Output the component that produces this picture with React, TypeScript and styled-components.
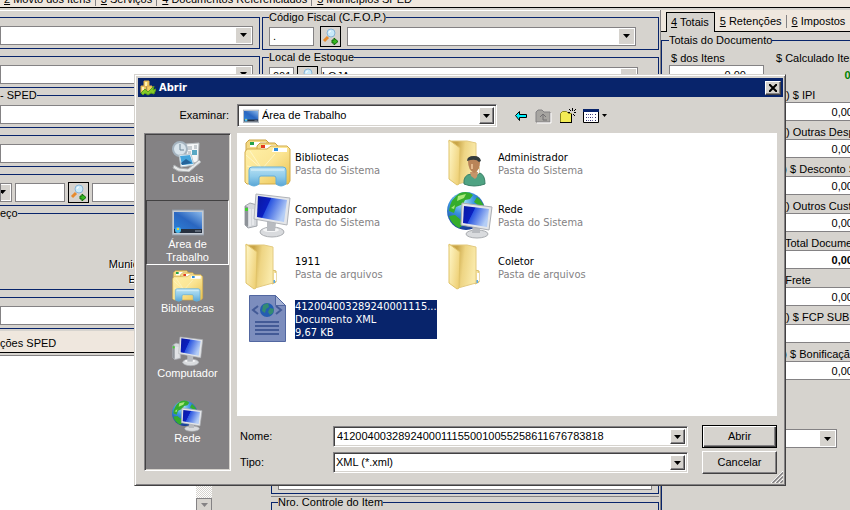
import React, { useId, useState } from 'react';
import styled, { createGlobalStyle, css } from 'styled-components';

const face = '#d6d3ce';
const shade = '#848284';
const dark = '#424142';
const navy = '#08246b';
const cream = '#efe7de';
const uiFont = '"Liberation Sans", Arial, sans-serif';
const listFont = '"DejaVu Sans Condensed", "DejaVu Sans", sans-serif';

const GlobalStyle = createGlobalStyle`
  *, *::before, *::after { box-sizing: border-box; }
  body { margin: 0; background: ${face}; color: #000; font: 11px/13px ${uiFont}; }
  button, input, select, textarea { font: inherit; color: inherit; margin: 0; border-radius: 0; }
  button, input, select, textarea { outline: none; }
  svg { display: block; flex: none; }
`;

/* ---------- icons ---------- */

const Icon = ({ size, box = 48, children }: { size: number; box?: number; children: React.ReactNode }) => (
  <svg width={size} height={size} viewBox={`0 0 ${box} ${box}`} aria-hidden="true">
    {children}
  </svg>
);

const LibrariesIcon = ({ size = 48 }) => {
  const id = useId();
  return (
    <Icon size={size}>
      <defs>
        <linearGradient id={`${id}f`} x1="0" y1="0" x2="1" y2="1">
          <stop offset="0" stopColor="#fff0a8" />
          <stop offset="0.5" stopColor="#fbe594" />
          <stop offset="1" stopColor="#e8c04c" />
        </linearGradient>
        <linearGradient id={`${id}s`} x1="0" y1="0" x2="0" y2="1">
          <stop offset="0" stopColor="#b9e2f4" />
          <stop offset="0.5" stopColor="#8fcbea" />
          <stop offset="1" stopColor="#5aa6d6" />
        </linearGradient>
      </defs>
      <path d="M2 12V4l3-3h17l3 3v9z" fill="#f3d983" stroke="#c9a447" />
      <path d="M6 3h16v5H6z" fill="#fff" />
      <path d="M6 3h4v3H6z" fill="#25a24a" />
      <path d="M13 14V7l3-3h15l3 3v8z" fill="#f3d983" stroke="#c9a447" />
      <path d="M17 6h15v5H17z" fill="#fff" />
      <path d="M17 6h4v3h-4z" fill="#e23b1d" />
      <path d="M1 13l2-3h20l4-3h16l3 3v32l-2 3H3l-2-2z" fill={`url(#${id}f)`} stroke="#d2ab4b" />
      <path d="M29 9h14v4H28z" fill="#fff" />
      <path d="M30 9h4v3h-4z" fill="#2f8ede" />
      <path d="M2 16l16 14M6 12l12 18M3 27l15 3M18 30l13-15" stroke="#fffbd8" strokeWidth="1" opacity="0.7" />
      <path d="M5 45V31q0-3 3-3h31q3 0 3 3v14q-5 4-10 0v-6q0-2-2-2H17q-2 0-2 2v6q-5 4-10 0z" fill={`url(#${id}s)`} stroke="#62aedb" />
      <path d="M7 31h33" stroke="#e3f6fc" />
    </Icon>
  );
};

const ScreenGradient = ({ id }: { id: string }) => (
  <linearGradient id={id} x1="0" y1="0" x2="1" y2="0.4">
    <stop offset="0" stopColor="#0a18a0" />
    <stop offset="0.42" stopColor="#0a1fc0" />
    <stop offset="0.45" stopColor="#2a55e0" />
    <stop offset="1" stopColor="#b4cdf6" />
  </linearGradient>
);

const ComputerIcon = ({ size = 48 }) => {
  const id = useId();
  return (
    <Icon size={size}>
      <defs><ScreenGradient id={id} /></defs>
      <path d="M1 15l5-3 7 2v21l-9 2-3-3z" fill="#d5d8dc" stroke="#a1a5ab" />
      <path d="M1 15l3 1v20l-3-2z" fill="#8d9298" />
      <path d="M6 18v17M9 18v16" stroke="#f7f8fa" />
      <path d="M1 17h3v3H1z" fill="#40d030" />
      <ellipse cx="28" cy="41" rx="12" ry="5" fill="#d9dbde" stroke="#a9acb0" />
      <ellipse cx="27" cy="39" rx="8" ry="2" fill="#f4f5f6" />
      <path d="M23 30l9 2-1 8h-8z" fill="#b8bbc0" />
      <path d="M12 3l34 4-3 27-33-6z" fill="#e4e6e9" stroke="#b0b3b8" />
      <path d="M14 5l29 4-3 22-27-5z" fill={`url(#${id})`} />
    </Icon>
  );
};

const NetworkIcon = ({ size = 48 }) => {
  const id = useId();
  return (
    <Icon size={size}>
      <defs>
        <ScreenGradient id={`${id}m`} />
        <radialGradient id={`${id}g`} cx="0.4" cy="0.25" r="0.8">
          <stop offset="0" stopColor="#b4e9fa" />
          <stop offset="0.4" stopColor="#3a93e0" />
          <stop offset="1" stopColor="#10308c" />
        </radialGradient>
      </defs>
      <circle cx="19" cy="20" r="19" fill={`url(#${id}g)`} />
      <path d="M13 2q8-3 13 2l-3 4-5 1-2 4-7 3-2 6-5-2Q3 8 13 2zM2 25l6-1 6 5 1 6-3 2Q4 33 2 25zM30 6q6 5 7 10l-6-2-4-3z" fill="#35ad2c" />
      <path d="M11 5l8-2-2 4-7 3zM4 17l4-3-1 4z" fill="#a8e878" />
      <ellipse cx="30" cy="43" rx="11" ry="4" fill="#d9dbde" stroke="#a9acb0" />
      <path d="M26 34l7 1v7h-8z" fill="#b8bbc0" />
      <path d="M15 12l30 4-3 23-28-5z" fill="#e4e6e9" stroke="#aaadb3" />
      <path d="M17 15l25 3-2 18-24-4z" fill={`url(#${id}m)`} />
    </Icon>
  );
};

const FolderShape = ({ id }: { id: string }) => (
  <>
    <defs>
      <linearGradient id={`${id}b`} x1="0" y1="0" x2="1" y2="0.2">
        <stop offset="0.3" stopColor="#c9a548" />
        <stop offset="0.6" stopColor="#eed584" />
        <stop offset="1" stopColor="#f9e9a9" />
      </linearGradient>
      <linearGradient id={`${id}l`} x1="0" y1="0" x2="1" y2="0.5">
        <stop offset="0" stopColor="#fff7c9" />
        <stop offset="1" stopColor="#efd27a" />
      </linearGradient>
    </defs>
    <path d="M28 27l4 1v11l-4 2z" fill="#f8e7a3" stroke="#d5b65e" />
    <path d="M31 30v8" stroke="#fff" strokeWidth="2" />
    <path d="M29 37h2v3h-2z" fill="#58a9e8" />
    <path d="M2 2l18 0 9 2v36l-18 5z" fill={`url(#${id}b)`} stroke="#e3ca80" />
    <path d="M2 1l11 8-1 36-2 1-8-6z" fill={`url(#${id}l)`} stroke="#e0c369" />
  </>
);

const FolderIcon = ({ size = 48 }) => (
  <Icon size={size}><FolderShape id={useId()} /></Icon>
);

const UserFolderIcon = ({ size = 48 }) => (
  <Icon size={size}>
    <FolderShape id={useId()} />
    <path d="M17 45q-1-9 7-10l5 2 4-3q5 2 5 11-11 4-21 0z" fill="#4fa383" stroke="#397f66" />
    <path d="M23 33h8l-1 5-2 2-4-3z" fill="#c69569" />
    <path d="M21 22q0-5 6-5t6 6q0 9-6 11-6-3-6-12z" fill="#b98458" />
    <path d="M20 22q0-5 7-5 6 0 7 5l-2 1q-3-4-12-1z" fill="#333b3c" />
    <path d="M24 25h2v5h-2z" fill="#e4b98d" />
  </Icon>
);

const XmlIcon = ({ size = 48 }) => (
  <Icon size={size}>
    <path d="M5.500 .5h26l10 10v36h-36z" fill="#7c8dbd" stroke="#5267a0" />
    <path d="M31.500 .5v10h10z" fill="#a4b1d3" stroke="#5267a0" />
    <path d="M14 11l-5 4 5 4M32 11l5 4-5 4" fill="none" stroke="#435a96" strokeWidth="2" />
    <circle cx="23" cy="15" r="7" fill="#245db1" />
    <path d="M19 10l5-2 1 4-3 2-1 4-3-2zM26 13l4 1-1 4-3 2-2-3z" fill="#338b72" />
    <path d="M11 27h24M11 31h24M11 35h24M11 39h24" stroke="#435a96" strokeWidth="2" />
  </Icon>
);

const DesktopIcon = ({ size = 32 }) => {
  const id = useId();
  return (
    <Icon size={size} box={32}>
      <defs>
        <linearGradient id={id} x1="0" y1="1" x2="1" y2="0">
          <stop offset="0" stopColor="#2d7fd6" />
          <stop offset="0.5" stopColor="#2a66c0" />
          <stop offset="1" stopColor="#8ab8ea" />
        </linearGradient>
      </defs>
      <path d="M0 4h32v25H0z" fill="#c3cad3" stroke="#8f98a4" />
      <path d="M2 6h28v18H2z" fill={`url(#${id})`} />
      <path d="M2 23h28v4H2z" fill="#26303f" />
      <path d="M23 24h6v2h-6z" fill="#5c6777" />
      <circle cx="6" cy="24" r="3" fill="#47b9ef" />
      <path d="M5 22h2v2H5z" fill="#f0d23c" />
    </Icon>
  );
};

const PlacesIcon = ({ size = 32 }) => (
  <Icon size={size} box={32}>
    <path d="M14 4l13-1-1 19-12 2z" fill="#f5f7f8" stroke="#bbc0c4" />
    <path d="M16 7h4M16 9h4M22 6h3M22 8h3M16 12h3M16 14h3" stroke="#9ba4ac" />
    <path d="M20 10h5v5h-5z" fill="#58a8c4" />
    <circle cx="8" cy="9" r="7" fill="#d8e4ec" stroke="#a4b3bf" strokeWidth="2" />
    <path d="M8 4v6h4" fill="none" stroke="#6f8696" />
    <path d="M2 25l5 3 9 1 11-9 2 2-12 10-11-1-5-3z" fill="#e6e8e9" stroke="#aaaeb0" />
    <path d="M7 15l12-1 3 11-13 2z" fill="#f5fbff" stroke="#b8c5cc" />
    <path d="M8 16l10-1 3 9-11 1z" fill="#45a5dc" />
    <path d="M9 23l5-4 6 4-10 2z" fill="#24639a" />
  </Icon>
);

const AppIcon = () => (
  <Icon size={16} box={16}>
    <path d="M4 1h5v5H4zM1 6h5v7H1zM7 6h5v5H7z" fill="#f2cf63" stroke="#e0b050" />
    <path d="M5 2h2v4H5zM2 7h2v3H2z" fill="#fff0b0" />
    <path d="M1 13l4-4 3 3 6-6-1 4 3-1-2 5-3-1-3 2-3-2-2 2z" fill="#84c928" stroke="#5ba01c" />
  </Icon>
);

const LookupIcon = () => (
  <Icon size={17} box={17}>
    <path d="M2 13l4-4" stroke="#e68a2d" strokeWidth="3" />
    <circle cx="9" cy="5" r="4" fill="#c9eafa" stroke="#88b4d8" />
    <path d="M7 5q0-2 2-2" fill="none" stroke="#fff" />
    <path d="M10 12h2v-2l4 3.500-4 3.500v-2h-2z" fill="#35b91e" stroke="#126a0b" />
  </Icon>
);

const BackIcon = () => (
  <svg width="14" height="12" viewBox="0 0 14 12" aria-hidden="true">
    <path d="M1.500 5.500l4-4v3h7v3h-7v3z" fill="#00f3ff" stroke="#000" />
  </svg>
);

const UpIcon = () => (
  <svg width="17" height="16" viewBox="0 0 17 16" aria-hidden="true">
    <path d="M1 14V4l2-2h4l2 2h6v10z" fill="#a7a5a1" stroke="#848284" />
    <path d="M5 9l3-3 3 3M8 7v5h4" fill="none" stroke="#737173" />
    <path d="M2 15h14V5" fill="none" stroke="#fff" />
  </svg>
);

const NewFolderIcon = () => (
  <svg width="17" height="16" viewBox="0 0 17 16" aria-hidden="true">
    <path d="M1.500 14.500v-9l2-2h4l2 2h3v9z" fill="#f3ec55" stroke="#8a8620" />
    <path d="M1 14.500h12M12.500 6v9" stroke="#000" />
    <path d="M13.500 0v3M10 1l2 2M17 1l-2 2M15 4.500h2M14 6l2 2M9 4.500h2" stroke="#000" />
  </svg>
);

const ViewIcon = () => (
  <svg width="17" height="16" viewBox="0 0 17 16" aria-hidden="true">
    <path d="M.5 1.500h15v13H.5z" fill="#fff" stroke="#000" />
    <path d="M0 1h16v3H0z" fill={navy} />
    <path d="M3 6h1v1H3zM3 9h1v1H3zM3 12h1v1H3zM7 6h1v1H7zM7 9h1v1H7zM7 12h1v1H7zM12 6h1v1h-1zM12 9h1v1h-1zM12 12h1v1h-1z" fill="#31306b" />
    <path d="M5 6h1v1H5zM5 9h1v1H5zM5 12h1v1H5zM9 6h1v1H9zM9 9h1v1H9zM9 12h1v1H9z" fill="#63619c" />
  </svg>
);

const Triangle = () => (
  <svg width="7" height="4" viewBox="0 0 7 4" aria-hidden="true">
    <path d="M0 0h7L3.500 4z" fill="currentColor" />
  </svg>
);

const CrossIcon = () => (
  <svg width="8" height="8" viewBox="0 0 8 8" aria-hidden="true">
    <path d="M0 0l8 8M8 0L0 8" stroke="#000" strokeWidth="2" />
  </svg>
);

/* ---------- form controls of the document window ---------- */

const FlatInput = styled.input<{ $width?: number; $align?: string; $bold?: boolean }>`
  display: block;
  width: ${(p) => (p.$width ? `${p.$width}px` : '100%')};
  flex: ${(p) => (p.$width ? 'none' : '1')};
  min-width: 0;
  height: 19px;
  padding: 0 ${(p) => (p.$align === 'right' ? 17 : 0)}px 0 3px;
  border: 1px solid ${shade};
  background: #fff;
  text-align: ${(p) => p.$align ?? 'left'};
  font-weight: ${(p) => (p.$bold ? 700 : 400)};
`;

const ComboFrame = styled.span<{ $sunken?: boolean; $width?: number }>`
  display: grid;
  grid-template-columns: minmax(0, 1fr);
  flex: ${(p) => (p.$width ? 'none' : '1')};
  width: ${(p) => (p.$width ? `${p.$width}px` : 'auto')};
  min-width: 0;
  height: 19px;
  overflow: hidden;
  align-items: stretch;
  background: #fff;
  border: 1px solid ${shade};
  > * { grid-area: 1 / 1; }
  ${(p) => p.$sunken && css`
    height: 21px;
    border-color: ${shade} #fff #fff ${shade};
    box-shadow: inset 1px 1px ${dark}, inset -1px -1px ${face};
    padding: 2px;
  `}
`;

const NativeSelect = styled.select`
  appearance: none;
  width: 100%;
  min-width: 0;
  border: 0;
  padding: 0 20px 0 0;
  background: transparent;
`;

const raised = css`
  border: 1px solid;
  border-color: #fff ${dark} ${dark} #fff;
  box-shadow: inset -1px -1px ${shade};
`;

const ComboArrow = styled.span<{ $raised?: boolean }>`
  justify-self: end;
  display: flex;
  align-items: center;
  justify-content: center;
  width: 15px;
  margin: ${(p) => (p.$raised ? 0 : 1)}px;
  background: ${face};
  pointer-events: none;
  ${(p) => p.$raised && raised}
`;

const FlatCombo = ({ label, value = '', width }: { label: string; value?: string; width?: number }) => (
  <ComboFrame $width={width}>
    <NativeSelect aria-label={label}><option>{value}</option></NativeSelect>
    <ComboArrow><Triangle /></ComboArrow>
  </ComboFrame>
);

const LookupButton = styled.button`
  display: flex;
  flex: none;
  align-items: center;
  justify-content: center;
  width: 21px;
  height: 21px;
  padding: 0;
  border: 1px solid #000;
  background: ${face};
`;

const Group = styled.fieldset<{ $titled?: boolean }>`
  margin: ${(p) => (p.$titled ? 1 : 7)}px 0 0;
  padding: ${(p) => (p.$titled ? 2 : 7)}px 6px 3px;
  min-width: 0;
  border: 1px solid ${navy};
  legend { padding: 0; line-height: 13px; white-space: nowrap; }
`;

const LeftGroup = styled(Group)`
  border-left: 0;
  padding-left: 0;
`;

const FieldRow = styled.div<{ $gap?: number }>`
  display: flex;
  align-items: center;
  gap: ${(p) => p.$gap ?? 3}px;
  height: 20px;
`;

/* ---------- document window ---------- */

const Screen = styled.div`
  position: relative;
  display: flex;
  flex-direction: column;
  height: 100vh;
  overflow: hidden;
  background: ${face};
`;

const TopTabs = styled.nav`
  display: flex;
  align-items: flex-end;
  flex: none;
  height: 8px;
  padding: 0 4px 1px;
  overflow: hidden;
  white-space: nowrap;
  background: ${cream};
  border-bottom: 1px solid #000;
`;

const TabButton = styled.button<{ $active?: boolean }>`
  flex: none;
  padding: 0 4px 0 5px;
  border: 0;
  background: none;
  line-height: 13px;
  & + & { border-left: 1px solid ${shade}; }
  &:first-child { padding-left: 0; }
  ${(p) => p.$active && css`
    align-self: stretch;
    &&:first-child { padding: 0 5px 0 4px; }
    background: ${face};
    border: 1px solid #000;
    border-bottom: 0;
    && + button { border-left: 0; }
  `}
`;

const Key = styled.span`
  text-decoration: underline;
`;

const Tab = ({ k, children, active }: { k: string; children: string; active?: boolean }) => (
  <TabButton type="button" $active={active}><Key>{k}</Key> {children}</TabButton>
);

const Columns = styled.div`
  display: grid;
  grid-template-columns: minmax(0, 660fr) minmax(0, 190fr);
  grid-template-rows: minmax(0, 1fr);
  flex: 1;
  min-height: 0;
`;

const Main = styled.main`
  display: flex;
  flex-direction: column;
  min-width: 0;
  margin-top: 2px;
  border-top: 1px solid #fff;
`;

const Header = styled.div`
  display: grid;
  grid-template-columns: minmax(0, 260fr) minmax(0, 397fr);
  gap: 2px;
  margin: -1px 1px 0 0;
`;

const AddressLabels = styled.div`
  display: flex;
  flex-direction: column;
  align-items: flex-end;
  width: 159px;
  height: 64px;
  padding: 35px 0 0;
  line-height: 15px;
  text-shadow: 1px 1px #fff;
`;

const Lower = styled.div`
  display: grid;
  grid-template-columns: 212px minmax(0, 1fr);
  grid-template-rows: minmax(0, 1fr);
  column-gap: 59px;
  flex: 1;
  min-height: 0;
  padding: 2px 1px 0 0;
`;

const Notes = styled.section`
  display: flex;
  flex-direction: column;
  min-height: 0;
`;

const NotesTitle = styled.label`
  flex: none;
  height: 22px;
  margin: 0 -48px 2px 0;
  padding-top: 6px;
  background: ${cream};
  border-bottom: 1px solid #000;
`;

const NotesBody = styled.div`
  display: flex;
  flex: 1;
  min-height: 0;
  border-top: 1px solid ${shade};
`;

const NotesText = styled.textarea`
  flex: 1;
  min-width: 0;
  resize: none;
  border: 0;
  background: #fff;
`;

const ScrollTrack = styled.div`
  display: flex;
  align-items: flex-end;
  width: 16px;
  background: repeating-conic-gradient(#fff 0 25%, ${face} 0 50%) 0 0 / 2px 2px;
`;

const ScrollButton = styled.button`
  display: flex;
  align-items: center;
  justify-content: center;
  width: 16px;
  height: 12px;
  padding: 0;
  color: ${shade};
  background: ${face};
  border: 1px solid ${shade};
  border-bottom: 0;
`;

const Items = styled.section`
  min-width: 0;
`;

const ItemsArea = styled.textarea`
  display: block;
  width: 100%;
  height: 144px;
  resize: none;
  border: 1px solid ${shade};
  background: #fff;
`;

const Rule = styled.hr`
  height: 1px;
  margin: 2px 0 -2px;
  border: 0;
  background: ${shade};
`;

const Side = styled.aside`
  min-width: 0;
  margin-top: 2px;
  overflow: hidden;
  border-left: 1px solid ${shade};
`;

const SideTabs = styled.nav`
  display: flex;
  align-items: center;
  height: 22px;
  padding: 2px 0 0 5px;
  white-space: nowrap;
  background: ${cream};
  border-bottom: 1px solid #000;
  button:first-child { height: 20px; }
`;

const Totals = styled(Group)`
  margin-top: 2px;
  padding: 4px 0 0 7px;
  border-right: 0;
  height: 500px;
`;

const TotalGrid = styled.div`
  display: grid;
  grid-template-columns: 95px 95px;
  column-gap: 12px;
  padding-top: 1px;
`;

const TotalField = styled.label`
  display: block;
  grid-column: 2;
  height: 37px;
  white-space: nowrap;
  &:first-child { grid-column: 1; }
  > span { display: block; height: 13px; }
  &:first-child > span { padding-left: 2px; }
`;

const TotalOutput = styled.output`
  display: block;
  padding: 4px 5px 0 0;
  text-align: right;
  color: #008200;
  font-weight: 700;
`;

const SideComboRow = styled.div`
  display: flex;
  padding: 44px 0 0 107px;
`;

/* ---------- open dialog ---------- */

const Dialog = styled.div`
  position: absolute;
  top: 74px;
  left: 134px;
  right: 64px;
  padding: 2px;
  background: ${face};
  border: 1px solid;
  border-color: ${face} ${dark} ${dark} ${face};
  box-shadow: inset 1px 1px #fff, inset -1px -1px ${shade};
`;

const TitleBar = styled.header`
  display: flex;
  align-items: center;
  gap: 3px;
  height: 19px;
  margin: 1px 0 0 1px;
  padding: 0 2px;
  background: ${navy};
  color: #fff;
  font: 700 11px/13px ${listFont};
`;

const TitleText = styled.h1`
  flex: 1;
  margin: 0;
  font: inherit;
`;

const CloseButton = styled.button`
  display: flex;
  align-items: center;
  justify-content: center;
  width: 16px;
  height: 14px;
  padding: 0;
  background: ${face};
  ${raised}
`;

const LookRow = styled.div`
  display: flex;
  align-items: center;
  height: 23px;
  margin: 7px 6px 6px 7px;
`;

const LookLabel = styled.label`
  width: 85px;
  margin-right: 8px;
  text-align: right;
`;

const LookCombo = styled(ComboFrame)`
  flex: 0 1 260px;
  height: 23px;
  > svg { margin: 0 0 0 3px; align-self: center; }
  select { padding-left: 22px; }
`;

const Toolbar = styled.div`
  display: flex;
  align-items: center;
  gap: 7px;
  margin-left: 17px;
`;

const ToolButton = styled.button`
  display: flex;
  align-items: center;
  gap: 2px;
  padding: 0;
  border: 0;
  background: none;
`;

const Work = styled.div`
  display: grid;
  grid-template-columns: 87px minmax(0, 1fr);
  column-gap: 6px;
  margin: 0 6px 0 7px;
`;

const PlacesBar = styled.nav`
  height: 338px;
  padding: 1px;
  background: ${shade};
  border: 1px solid;
  border-color: ${shade} #fff #fff ${shade};
  box-shadow: inset 1px 1px ${dark}, inset -1px -1px ${face};
`;

const PlaceButton = styled.button<{ $active?: boolean }>`
  display: flex;
  flex-direction: column;
  align-items: center;
  width: 100%;
  height: 65px;
  padding: ${(p) => (p.$active ? 5 : 4)}px 8px 0;
  color: #fff;
  background: none;
  border: 1px solid transparent;
  line-height: 13px;
  ${(p) => p.$active && css`
    border-color: ${dark} #fff #fff ${dark};
  `}
`;

const Pane = styled.div`
  display: flex;
  flex-direction: column;
`;

const FileList = styled.div`
  display: grid;
  grid-template-columns: repeat(auto-fill, 203px);
  grid-auto-rows: 52px;
  height: 283px;
  padding: 6px 7px;
  background: #fff;
  font: 11px/13px ${listFont};
`;

const FileButton = styled.button`
  display: flex;
  align-items: center;
  gap: 3px;
  height: 50px;
  padding: 0 0 2px;
  border: 0;
  background: none;
  text-align: left;
  white-space: nowrap;
`;

const FileText = styled.span<{ $selected?: boolean }>`
  display: block;
  color: ${(p) => (p.$selected ? '#fff' : '#848284')};
  background: ${(p) => (p.$selected ? navy : 'transparent')};
  margin-top: ${(p) => (p.$selected ? 0 : 2)}px;
`;

const FileLine = styled.span<{ $name?: boolean }>`
  display: block;
  color: ${(p) => (p.$name ? '#000' : 'inherit')};
`;

const NameForm = styled.form`
  display: grid;
  grid-template-columns: 93px minmax(0, 1fr) 75px;
  align-items: center;
  row-gap: 3px;
  padding: 9px 0 0 3px;
`;

const FormCombo = styled(ComboFrame)`
  margin-right: 14px;
`;

const NameInput = styled.input`
  width: 100%;
  min-width: 0;
  padding: 0 18px 0 1px;
  border: 0;
  background: transparent;
`;

const DialogButton = styled.button<{ $primary?: boolean }>`
  height: 23px;
  padding: 0 0 1px;
  background: ${face};
  ${raised}
  ${(p) => p.$primary && css`
    border-color: #000;
    box-shadow: inset 1px 1px #fff, inset -1px -1px ${dark}, inset -2px -2px ${shade};
  `}
`;

const GripRow = styled.div`
  display: flex;
  justify-content: flex-end;
  height: 12px;
  margin-top: -3px;
`;

const files = [
  { name: 'Bibliotecas', lines: ['Pasta do Sistema'], Art: LibrariesIcon },
  { name: 'Administrador', lines: ['Pasta do Sistema'], Art: UserFolderIcon },
  { name: 'Computador', lines: ['Pasta do Sistema'], Art: ComputerIcon },
  { name: 'Rede', lines: ['Pasta do Sistema'], Art: NetworkIcon },
  { name: '1911', lines: ['Pasta de arquivos'], Art: FolderIcon },
  { name: 'Coletor', lines: ['Pasta de arquivos'], Art: FolderIcon },
  { name: '412004003289240001115...', lines: ['Documento XML', '9,67 KB'], Art: XmlIcon, selected: true },
];

const places = [
  { name: 'Locais', Art: PlacesIcon },
  { name: 'Área de Trabalho', Art: DesktopIcon, active: true },
  { name: 'Bibliotecas', Art: LibrariesIcon },
  { name: 'Computador', Art: ComputerIcon },
  { name: 'Rede', Art: NetworkIcon },
];

const totals = [
  { label: '(+) $ IPI', value: '0,00' },
  { label: '(+) Outras Despesas', value: '0,00' },
  { label: '(-) $ Desconto SUFRAMA', value: '0,00' },
  { label: '(+) Outros Custos', value: '0,00' },
  { label: '$ Total Documento', value: '0,00', bold: true },
  { label: '$ Frete', value: '0,00' },
  { label: '(+) $ FCP SUB', value: '' },
  { label: '(-) $ Bonificação', value: '0,00' },
];

const OpenDialog = () => {
  const [name, setName] = useState('41200400328924000111550010055258611676783818');
  return (
    <Dialog role="dialog" aria-labelledby="dialog-title">
      <TitleBar>
        <AppIcon />
        <TitleText id="dialog-title">Abrir</TitleText>
        <CloseButton type="button" aria-label="Fechar"><CrossIcon /></CloseButton>
      </TitleBar>
      <LookRow>
        <LookLabel htmlFor="look-in">Examinar:</LookLabel>
        <LookCombo $sunken>
          <DesktopIcon size={16} />
          <NativeSelect id="look-in"><option>Área de Trabalho</option></NativeSelect>
          <ComboArrow $raised><Triangle /></ComboArrow>
        </LookCombo>
        <Toolbar>
          <ToolButton type="button" aria-label="Voltar"><BackIcon /></ToolButton>
          <ToolButton type="button" aria-label="Um nível acima" disabled><UpIcon /></ToolButton>
          <ToolButton type="button" aria-label="Nova pasta"><NewFolderIcon /></ToolButton>
          <ToolButton type="button" aria-label="Modos de exibição">
            <ViewIcon />
            <svg width="5" height="3" viewBox="0 0 5 3" aria-hidden="true"><path d="M0 0h5L2.500 3z" /></svg>
          </ToolButton>
        </Toolbar>
      </LookRow>
      <Work>
        <PlacesBar aria-label="Locais">
          {places.map(({ name: label, Art, active }) => (
            <PlaceButton key={label} type="button" $active={active}>
              <Art size={32} />
              {label}
            </PlaceButton>
          ))}
        </PlacesBar>
        <Pane>
          <FileList>
            {files.map(({ name: label, lines, Art, selected }) => (
              <FileButton key={label} type="button">
                <Art />
                <FileText $selected={selected}>
                  <FileLine $name={!selected}>{label}</FileLine>
                  {lines.map((line) => <FileLine key={line}>{line}</FileLine>)}
                </FileText>
              </FileButton>
            ))}
          </FileList>
          <NameForm onSubmit={(e) => e.preventDefault()}>
            <label htmlFor="file-name">Nome:</label>
            <FormCombo $sunken>
              <NameInput id="file-name" value={name} onChange={(e) => setName(e.target.value)} />
              <ComboArrow $raised><Triangle /></ComboArrow>
            </FormCombo>
            <DialogButton type="submit" $primary>Abrir</DialogButton>
            <label htmlFor="file-type">Tipo:</label>
            <FormCombo $sunken>
              <NativeSelect id="file-type"><option>XML (*.xml)</option></NativeSelect>
              <ComboArrow $raised><Triangle /></ComboArrow>
            </FormCombo>
            <DialogButton type="button">Cancelar</DialogButton>
          </NameForm>
        </Pane>
      </Work>
      <GripRow>
        <svg width="12" height="12" viewBox="0 0 12 12" aria-hidden="true">
          <path d="M0 12L12 0M4 12l8-8M8 12l4-4" stroke="#fff" />
          <path d="M1.500 12L12 1.500M5.500 12L12 5.500M9.500 12L12 9.500" stroke={shade} strokeWidth="1.500" />
        </svg>
      </GripRow>
    </Dialog>
  );
};

export default function App() {
  return (
    <>
      <GlobalStyle />
      <Screen>
        <TopTabs>
          <Tab k="2">Movto dos Itens</Tab>
          <Tab k="3">Serviços</Tab>
          <Tab k="4">Documentos Referenciados</Tab>
          <Tab k="5">Municípios SPED</Tab>
        </TopTabs>
        <Columns>
          <Main>
            <Header>
              <div>
                <LeftGroup><FieldRow><FlatCombo label="Operação" /></FieldRow></LeftGroup>
                <LeftGroup><FieldRow><FlatCombo label="Emitente" /></FieldRow></LeftGroup>
                <LeftGroup $titled>
                  <legend>- SPED</legend>
                  <FieldRow><FlatInput aria-label="SPED" /></FieldRow>
                </LeftGroup>
                <LeftGroup><FieldRow><FlatInput aria-label="Descrição" /></FieldRow></LeftGroup>
                <LeftGroup>
                  <FieldRow>
                    <FlatCombo label="Tipo de pessoa" width={12} />
                    <FlatInput aria-label="Código" $width={50} />
                    <LookupButton type="button" aria-label="Pesquisar pessoa"><LookupIcon /></LookupButton>
                    <FlatInput aria-label="Pessoa" />
                  </FieldRow>
                </LeftGroup>
                <LeftGroup $titled>
                  <legend>eço</legend>
                  <AddressLabels><span>Município:</span><span>Email:</span></AddressLabels>
                </LeftGroup>
                <LeftGroup><FieldRow><FlatInput aria-label="Complemento" /></FieldRow></LeftGroup>
              </div>
              <div>
                <Group $titled>
                  <legend>Código Fiscal (C.F.O.P.)</legend>
                  <FieldRow $gap={6}>
                    <FlatInput aria-label="Código fiscal" defaultValue="." $width={45} />
                    <LookupButton type="button" aria-label="Pesquisar código fiscal"><LookupIcon /></LookupButton>
                    <FlatCombo label="Descrição fiscal" width={289} />
                  </FieldRow>
                </Group>
                <Group $titled>
                  <legend>Local de Estoque</legend>
                  <FieldRow>
                    <FlatInput aria-label="Local" defaultValue="001" $width={25} />
                    <LookupButton type="button" aria-label="Pesquisar local"><LookupIcon /></LookupButton>
                    <FlatCombo label="Nome do local" value="LOJA" width={317} />
                  </FieldRow>
                </Group>
              </div>
            </Header>
            <Lower>
              <Notes>
                <NotesTitle htmlFor="notes">ções SPED</NotesTitle>
                <NotesBody>
                  <NotesText id="notes" />
                  <ScrollTrack>
                    <ScrollButton type="button" aria-label="Rolar para baixo"><Triangle /></ScrollButton>
                  </ScrollTrack>
                </NotesBody>
              </Notes>
              <Items>
                <Group><ItemsArea aria-label="Itens" /></Group>
                <Rule />
                <Group $titled>
                  <legend>Nro. Controle do Item</legend>
                  <FieldRow><FlatInput aria-label="Número de controle" /></FieldRow>
                </Group>
              </Items>
            </Lower>
          </Main>
          <Side>
            <SideTabs>
              <Tab k="4" active>Totais</Tab>
              <Tab k="5">Retenções</Tab>
              <Tab k="6">Impostos</Tab>
            </SideTabs>
            <Totals $titled>
              <legend>Totais do Documento</legend>
              <TotalGrid>
                <TotalField><span>$ dos Itens</span><FlatInput defaultValue="0.00" $align="right" /></TotalField>
                <TotalField as="div"><span>$ Calculado Itens</span><TotalOutput>0,00</TotalOutput></TotalField>
                {totals.map((t) => (
                  <TotalField key={t.label}>
                    <span>{t.label}</span>
                    <FlatInput defaultValue={t.value} $align="right" $bold={t.bold} />
                  </TotalField>
                ))}
              </TotalGrid>
              <SideComboRow><FlatCombo label="Condição" width={61} /></SideComboRow>
            </Totals>
          </Side>
        </Columns>
        <OpenDialog />
      </Screen>
    </>
  );
}
